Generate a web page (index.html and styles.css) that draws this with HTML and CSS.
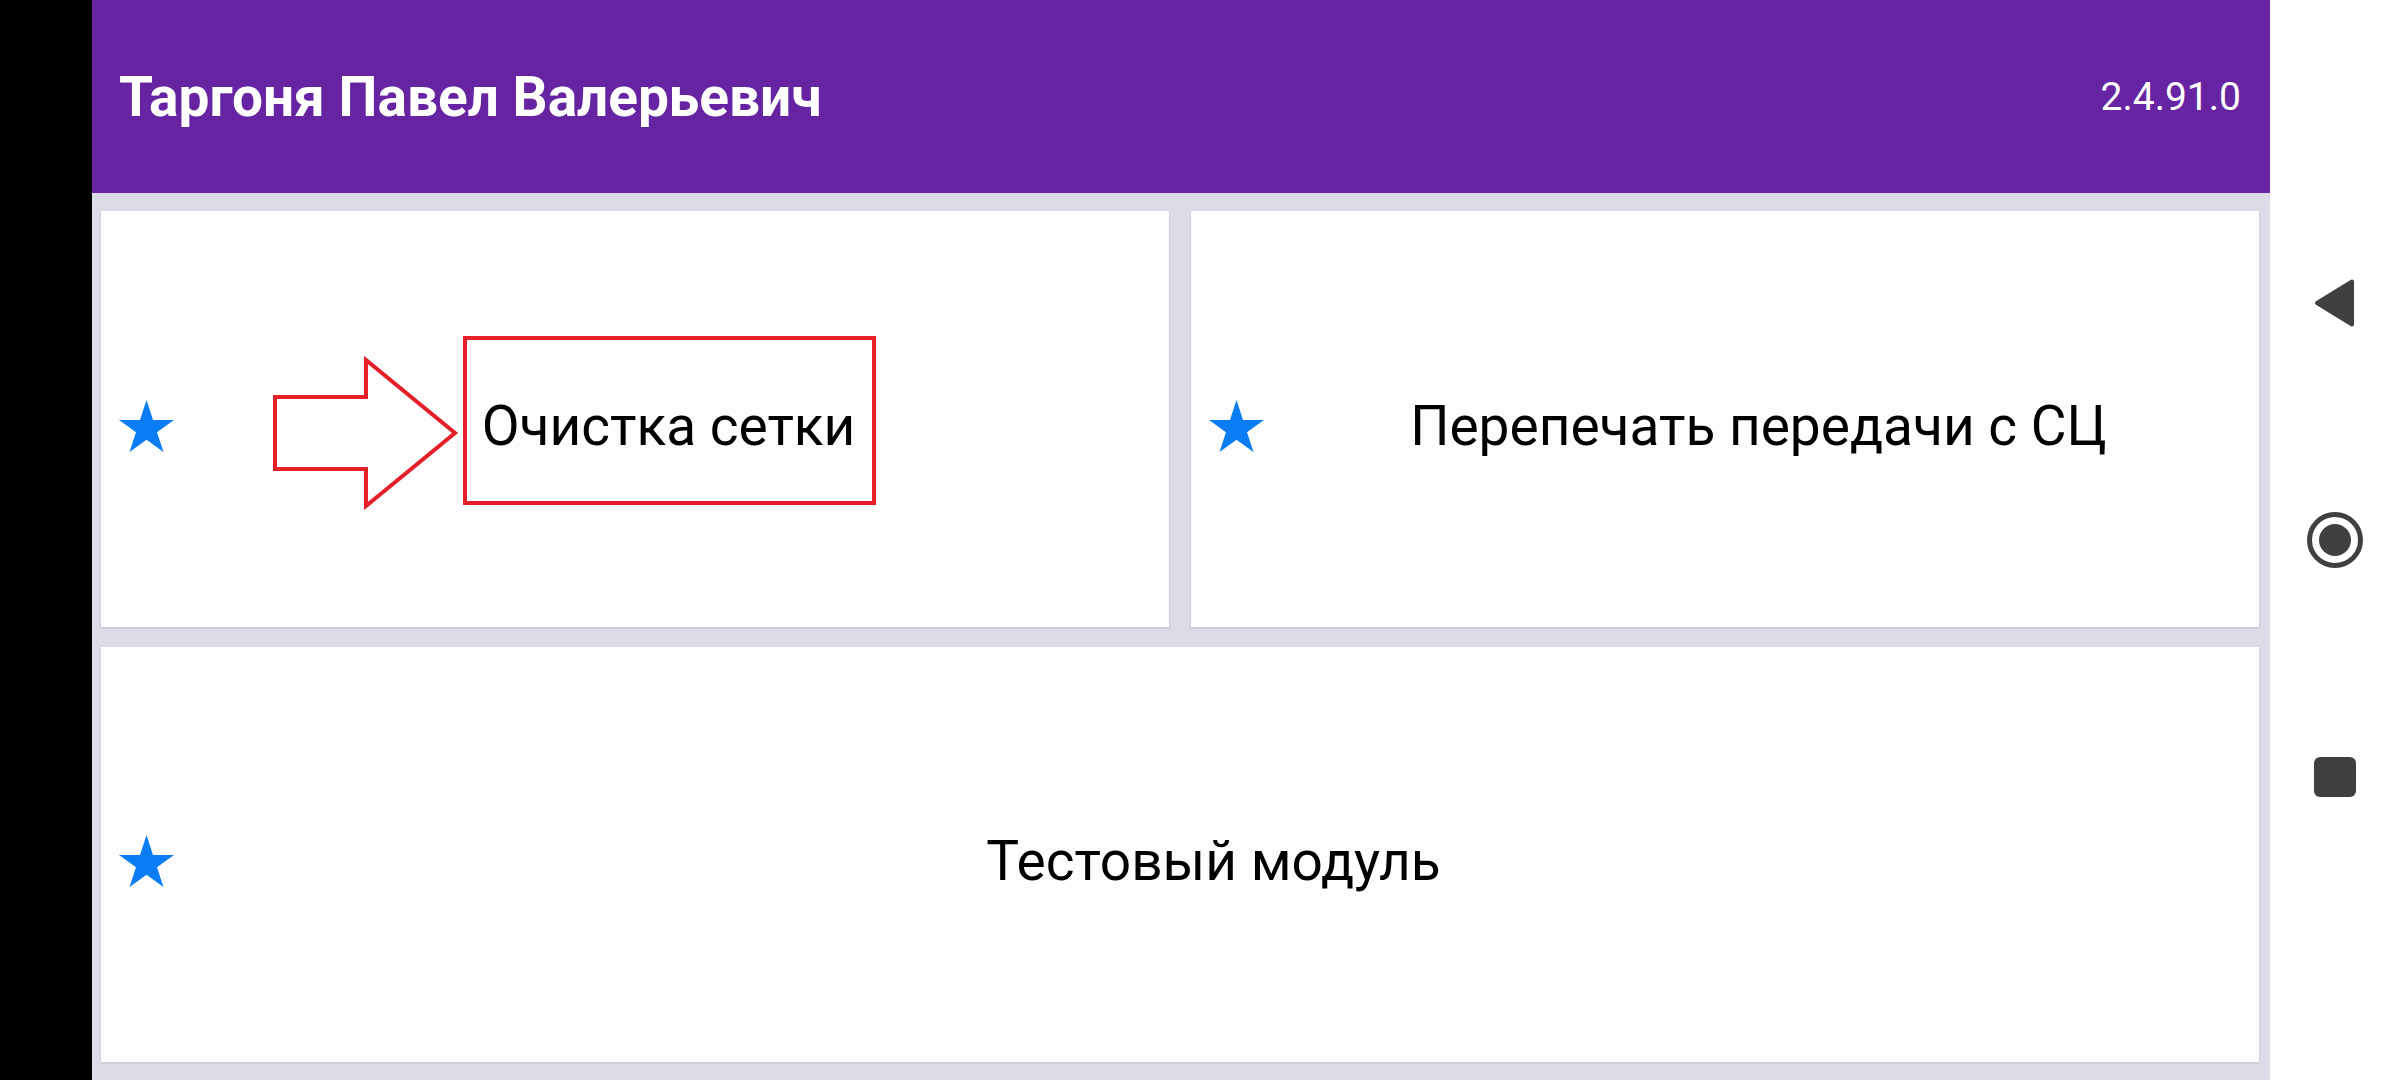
FILE: index.html
```html
<!DOCTYPE html>
<html lang="ru">
<head>
<meta charset="utf-8">
<title>Меню</title>
<link rel="stylesheet" href="styles.css">
</head>
<body>
<div class="screen">
  <div class="cutout"></div>
  <div class="app">
    <header class="appbar">
      <h1 class="title">Таргоня Павел Валерьевич</h1>
      <span class="version">2.4.91.0</span>
    </header>
    <main class="grid">
      <button class="tile">
        <svg class="star" viewBox="0 0 55 52" aria-hidden="true"><polygon points="27.5,0 34,19.9 55,19.9 38,32.2 44.5,52 27.5,39.8 10.5,52 17,32.2 0,19.9 21,19.9"/></svg>
        <span class="label">Очистка сетки</span>
      </button>
      <button class="tile">
        <svg class="star" viewBox="0 0 55 52" aria-hidden="true"><polygon points="27.5,0 34,19.9 55,19.9 38,32.2 44.5,52 27.5,39.8 10.5,52 17,32.2 0,19.9 21,19.9"/></svg>
        <span class="label">Перепечать передачи с СЦ</span>
      </button>
      <button class="tile tile-wide">
        <svg class="star" viewBox="0 0 55 52" aria-hidden="true"><polygon points="27.5,0 34,19.9 55,19.9 38,32.2 44.5,52 27.5,39.8 10.5,52 17,32.2 0,19.9 21,19.9"/></svg>
        <span class="label">Тестовый модуль</span>
      </button>
    </main>
  </div>
  <nav class="navbar">
    <span class="nav-btn">
      <svg viewBox="0 0 60 60"><polygon class="nav-shape" points="12,30 47,8.5 47,51.5"/></svg>
    </span>
    <span class="nav-btn">
      <svg viewBox="0 0 60 60"><circle class="nav-ring" cx="30" cy="30" r="25.5"/><circle class="nav-fill" cx="30" cy="30" r="16"/></svg>
    </span>
    <span class="nav-btn">
      <svg viewBox="0 0 60 60"><rect class="nav-fill" x="9" y="10" width="42" height="40" rx="6"/></svg>
    </span>
  </nav>
  <svg class="annotation" viewBox="0 0 2400 1080" aria-hidden="true">
    <polygon class="mark" points="275,397 366,397 366,360 455,433 366,506 366,469 275,469"/>
    <rect class="mark" x="465" y="338" width="409" height="165"/>
  </svg>
</div>
</body>
</html>
```
FILE: styles.css
```css
html, body {
  margin: 0;
  padding: 0;
  background: #000;
}

.screen {
  position: relative;
  display: flex;
  width: 2400px;
  height: 1080px;
  overflow: hidden;
  font-family: Roboto, "Noto Sans", "Liberation Sans", sans-serif;
}

.cutout {
  width: 92px;
  flex: none;
  background: #000;
}

.app {
  width: 2178px;
  flex: none;
  display: flex;
  flex-direction: column;
  background: #dcdbe8;
}

.appbar {
  height: 193px;
  flex: none;
  display: flex;
  align-items: center;
  justify-content: space-between;
  padding: 0 29px 0 27px;
  background: #6624a3;
  color: #fff;
}

.title {
  margin: 0;
  font-size: 55px;
  font-weight: 700;
  letter-spacing: 0;
}

.version {
  font-size: 39px;
  font-weight: 400;
}

.grid {
  flex: 1;
  display: grid;
  grid-template-columns: 1fr 1fr;
  grid-template-rows: 1fr 1fr;
  gap: 20px 22px;
  padding: 18px 11px 18px 9px;
}

.tile {
  display: flex;
  align-items: center;
  margin: 0;
  padding: 14px 6px 0 18px;
  border: none;
  background: #fdfdfd;
  box-shadow: 0 1px 2px rgba(60, 50, 90, 0.16);
  font: inherit;
  color: #000;
  text-align: center;
  cursor: pointer;
}

.tile-wide {
  grid-column: 1 / span 2;
}

.star {
  width: 55px;
  height: 52px;
  flex: none;
  fill: #0a7df5;
}

.label {
  flex: 1;
  font-size: 55px;
  font-weight: 400;
  color: #000;
}

.navbar {
  width: 130px;
  flex: none;
  display: flex;
  flex-direction: column;
  align-items: center;
  justify-content: center;
  gap: 177px;
  background: #fff;
}

.nav-btn {
  display: block;
  width: 60px;
  height: 60px;
}

.nav-btn svg {
  display: block;
  width: 60px;
  height: 60px;
}

.nav-shape {
  fill: #404040;
  stroke: #404040;
  stroke-width: 4;
  stroke-linejoin: round;
}

.nav-ring {
  fill: none;
  stroke: #404040;
  stroke-width: 5;
}

.nav-fill {
  fill: #404040;
}

.annotation {
  position: absolute;
  left: 0;
  top: 0;
  width: 2400px;
  height: 1080px;
  pointer-events: none;
}

.mark {
  fill: none;
  stroke: #e5202a;
  stroke-width: 4;
}
```
